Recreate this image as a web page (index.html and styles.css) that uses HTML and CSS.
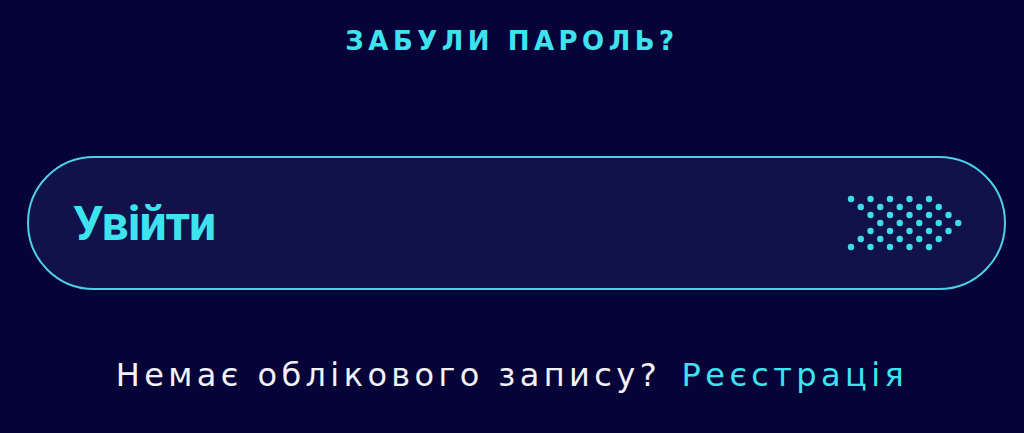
FILE: index.html
```html
<!DOCTYPE html>
<html lang="uk">
<head>
<meta charset="UTF-8">
<meta name="viewport" content="width=device-width, initial-scale=1.0">
<title>Вхід</title>
<link rel="stylesheet" href="styles.css">
</head>
<body>

<main class="login">
  <a class="forgot-link" href="#">ЗАБУЛИ ПАРОЛЬ?</a>

  <!-- Submit button with the dotted arrow -->
  <button class="login-btn" type="submit">
    <span class="login-btn-label">Увійти</span>
    <svg class="login-btn-arrow" width="116" height="56" viewBox="-1 -1 116 56">
      <g fill="#3fdcea">
        <circle cx="3" cy="3" r="3.2"/><circle cx="22.5" cy="3" r="3.2"/><circle cx="42" cy="3" r="3.2"/><circle cx="61.5" cy="3" r="3.2"/><circle cx="81" cy="3" r="3.2"/>
        <circle cx="12.75" cy="11" r="3.2"/><circle cx="32.25" cy="11" r="3.2"/><circle cx="51.75" cy="11" r="3.2"/><circle cx="71.25" cy="11" r="3.2"/><circle cx="90.75" cy="11" r="3.2"/>
        <circle cx="22.5" cy="19" r="3.2"/><circle cx="42" cy="19" r="3.2"/><circle cx="61.5" cy="19" r="3.2"/><circle cx="81" cy="19" r="3.2"/><circle cx="100.5" cy="19" r="3.2"/>
        <circle cx="32.25" cy="27" r="3.2"/><circle cx="51.75" cy="27" r="3.2"/><circle cx="71.25" cy="27" r="3.2"/><circle cx="90.75" cy="27" r="3.2"/><circle cx="110.25" cy="27" r="3.2"/>
        <circle cx="22.5" cy="35" r="3.2"/><circle cx="42" cy="35" r="3.2"/><circle cx="61.5" cy="35" r="3.2"/><circle cx="81" cy="35" r="3.2"/><circle cx="100.5" cy="35" r="3.2"/>
        <circle cx="12.75" cy="43" r="3.2"/><circle cx="32.25" cy="43" r="3.2"/><circle cx="51.75" cy="43" r="3.2"/><circle cx="71.25" cy="43" r="3.2"/><circle cx="90.75" cy="43" r="3.2"/>
        <circle cx="3" cy="51" r="3.2"/><circle cx="22.5" cy="51" r="3.2"/><circle cx="42" cy="51" r="3.2"/><circle cx="61.5" cy="51" r="3.2"/><circle cx="81" cy="51" r="3.2"/>
      </g>
    </svg>
  </button>

  <p class="signup">
    Немає облікового запису?
    <a class="signup-link" href="#">Реєстрація</a>
  </p>
</main>

</body>
</html>
```

FILE: styles.css
```css
/* General styles */
body {
  font-family: "DejaVu Sans", "Noto Sans", sans-serif;
  margin: 0;
  padding: 0;
  background-color: #050338;
  color: #fff;
}

.login {
  display: flex;
  flex-direction: column;
  align-items: center;
  padding-top: 26px;
}

.forgot-link {
  font-size: 26px;
  line-height: 30px;
  font-weight: 700;
  letter-spacing: 4.5px;
  color: #3fe3ef;
  text-decoration: none;
}

/* Big pill button */
.login-btn {
  align-self: stretch;
  margin: 100px 18px 0 27px;
  height: 134px;
  box-sizing: border-box;
  display: flex;
  align-items: center;
  justify-content: space-between;
  padding: 0 41px 0 44px;
  background-color: #12124a;
  border: 2px solid #4dcfe6;
  border-radius: 67px;
  cursor: pointer;
  font-family: inherit;
}

.login-btn-label {
  font-family: Roboto, sans-serif;
  font-size: 48px;
  font-weight: 700;
  letter-spacing: -1px;
  color: #3fe3ef;
}

.login-btn-arrow {
  display: block;
}

.signup {
  margin: 65px 0 0;
  font-size: 32px;
  line-height: 40px;
  font-weight: 400;
  letter-spacing: 4.4px;
  color: #f2f2f7;
}

.signup-link {
  margin-left: 6px;
  color: #3fe3ef;
  text-decoration: none;
}
```
